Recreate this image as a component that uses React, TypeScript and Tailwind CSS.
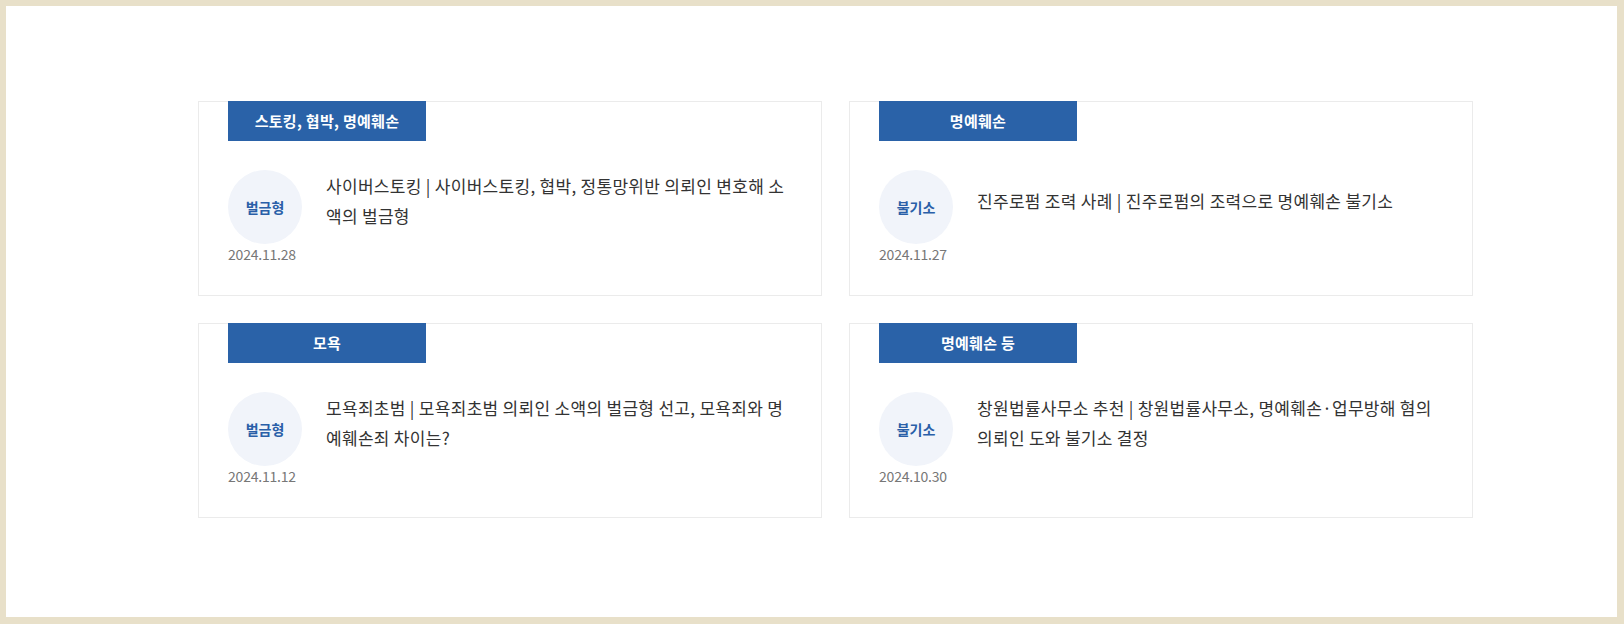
const posts = [
  {
    tag: "스토킹, 협박, 명예훼손",
    result: "벌금형",
    title: "사이버스토킹 | 사이버스토킹, 협박, 정통망위반 의뢰인 변호해 소액의 벌금형",
    date: "2024.11.28",
  },
  {
    tag: "명예훼손",
    result: "불기소",
    title: "진주로펌 조력 사례 | 진주로펌의 조력으로 명예훼손 불기소",
    date: "2024.11.27",
  },
  {
    tag: "모욕",
    result: "벌금형",
    title: "모욕죄초범 | 모욕죄초범 의뢰인 소액의 벌금형 선고, 모욕죄와 명예훼손죄 차이는?",
    date: "2024.11.12",
  },
  {
    tag: "명예훼손 등",
    result: "불기소",
    title: "창원법률사무소 추천 | 창원법률사무소, 명예훼손·업무방해 혐의 의뢰인 도와 불기소 결정",
    date: "2024.10.30",
  },
];

function PostCard({ post }: { post: (typeof posts)[number] }) {
  return (
    <div className="h-[195px] border border-[#ebebeb] bg-white">
      <div className="-mt-px ml-[29px] flex h-[40px] w-[198px] items-center justify-center bg-[#2a62a8] text-[15px] font-bold tracking-[0.3px] text-white">
        {post.tag}
      </div>

      <div className="mt-[29px] flex pl-[29px] pr-[30px]">
        <div className="flex w-[74px] shrink-0 flex-col">
          <span className="flex h-[74px] w-[74px] items-center justify-center rounded-full bg-[#f1f4fa] text-[14px] font-bold text-[#2a5fa8]">
            {post.result}
          </span>
          <span className="text-[14px] leading-[20px] tracking-[-0.2px] whitespace-nowrap text-[#777]">
            {post.date}
          </span>
        </div>

        {/* title sits a few px above the circle's centre */}
        <div className="ml-[24px] flex h-[74px] min-w-0 flex-1 items-center pb-3">
          <p className="text-[17px] leading-[30px] tracking-[0.3px] text-[#333]">{post.title}</p>
        </div>
      </div>
    </div>
  );
}

export default function App() {
  return (
    <div
      className="h-[624px] w-[1624px] bg-[#e8e0c9] pt-[6px] pr-[7px] pb-[7px] pl-[6px]"
      style={{ fontFamily: '"Noto Sans CJK KR", "Noto Sans", sans-serif' }}
    >
      <div className="h-full w-full bg-white pt-[95px] pl-[192px]">
        <div className="grid w-[1275px] grid-cols-2 gap-x-[27px] gap-y-[27px]">
          {posts.map((p) => (
            <PostCard key={p.date} post={p} />
          ))}
        </div>
      </div>
    </div>
  );
}
